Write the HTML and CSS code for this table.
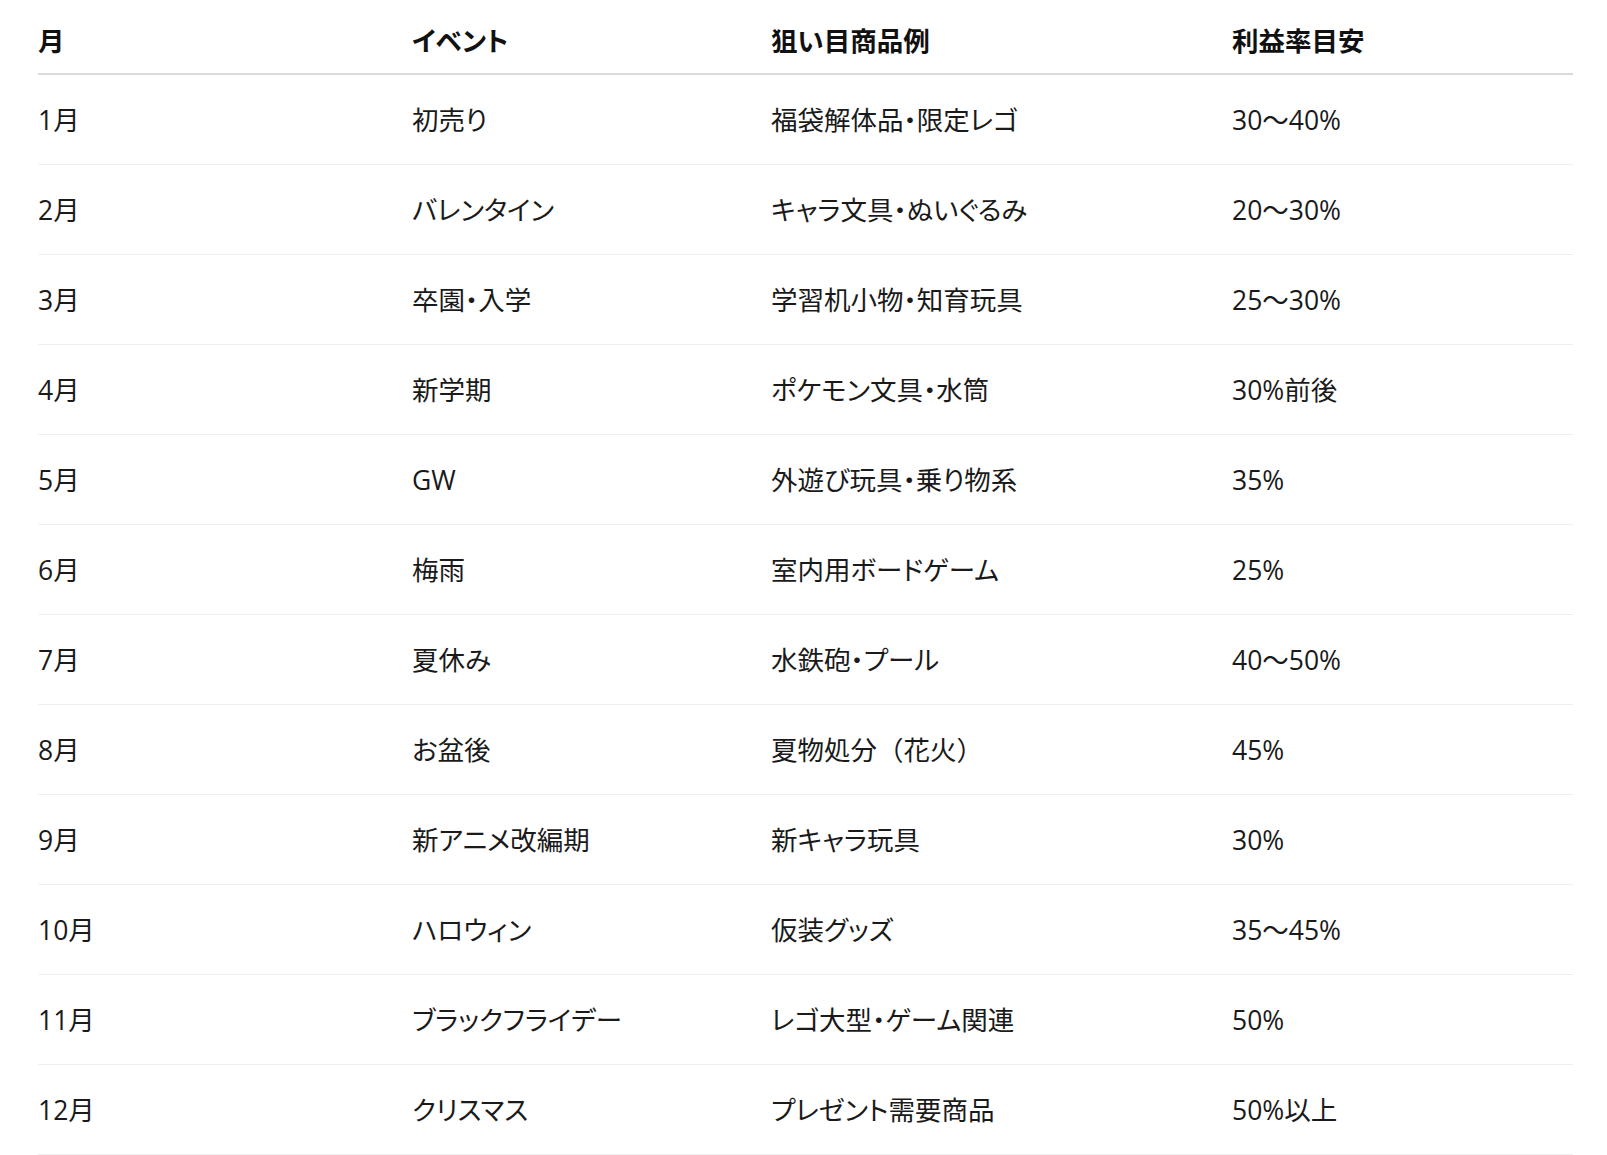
FILE: index.html
```html
<!DOCTYPE html>
<html lang="ja">
<head>
<meta charset="utf-8">
<title>月別イベント</title>
<link rel="stylesheet" href="styles.css">
</head>
<body>
<div class="wrap">
<table class="tbl">
<colgroup>
<col class="c1"><col class="c2"><col class="c3"><col class="c4">
</colgroup>
<thead>
<tr><th>月</th><th>イベント</th><th>狙い目商品例</th><th>利益率目安</th></tr>
</thead>
<tbody>
<tr><td>1月</td><td>初売り</td><td>福袋解体品・限定レゴ</td><td>30〜40%</td></tr>
<tr><td>2月</td><td>バレンタイン</td><td>キャラ文具・ぬいぐるみ</td><td>20〜30%</td></tr>
<tr><td>3月</td><td>卒園・入学</td><td>学習机小物・知育玩具</td><td>25〜30%</td></tr>
<tr><td>4月</td><td>新学期</td><td>ポケモン文具・水筒</td><td>30%前後</td></tr>
<tr><td>5月</td><td>GW</td><td>外遊び玩具・乗り物系</td><td>35%</td></tr>
<tr><td>6月</td><td>梅雨</td><td>室内用ボードゲーム</td><td>25%</td></tr>
<tr><td>7月</td><td>夏休み</td><td>水鉄砲・プール</td><td>40〜50%</td></tr>
<tr><td>8月</td><td>お盆後</td><td class="fw">夏物処分（花火）</td><td>45%</td></tr>
<tr><td>9月</td><td>新アニメ改編期</td><td>新キャラ玩具</td><td>30%</td></tr>
<tr><td>10月</td><td>ハロウィン</td><td>仮装グッズ</td><td>35〜45%</td></tr>
<tr><td>11月</td><td>ブラックフライデー</td><td>レゴ大型・ゲーム関連</td><td>50%</td></tr>
<tr><td>12月</td><td>クリスマス</td><td>プレゼント需要商品</td><td>50%以上</td></tr>
</tbody>
</table>
</div>
</body>
</html>
```
FILE: styles.css
```css
html, body {
  margin: 0;
  padding: 0;
  background: #ffffff;
}
body {
  font-family: "Open Sans", "Noto Sans CJK JP", sans-serif;
  color: #1a1a1a;
}
.wrap {
  padding: 0 34px 0 38px;
}
.tbl {
  width: 100%;
  border-collapse: collapse;
  table-layout: fixed;
  font-size: 26.5px;
  font-feature-settings: "palt" 1;
}
.c1 { width: 374px; }
.c2 { width: 359px; }
.c3 { width: 461px; }
.c4 { width: auto; }
.tbl th {
  text-align: left;
  font-weight: 700;
  color: #111;
  height: 73px;
  box-sizing: border-box;
  padding: 23px 0 14px 0;
  line-height: 36px;
  border-bottom: 2px solid #dadada;
  vertical-align: middle;
}
.tbl td {
  height: 89px;
  padding: 0;
  line-height: 36px;
  vertical-align: middle;
  border-bottom: 1px solid #efefef;
  font-weight: 400;
}
.tbl td.fw {
  font-feature-settings: normal;
}
```
